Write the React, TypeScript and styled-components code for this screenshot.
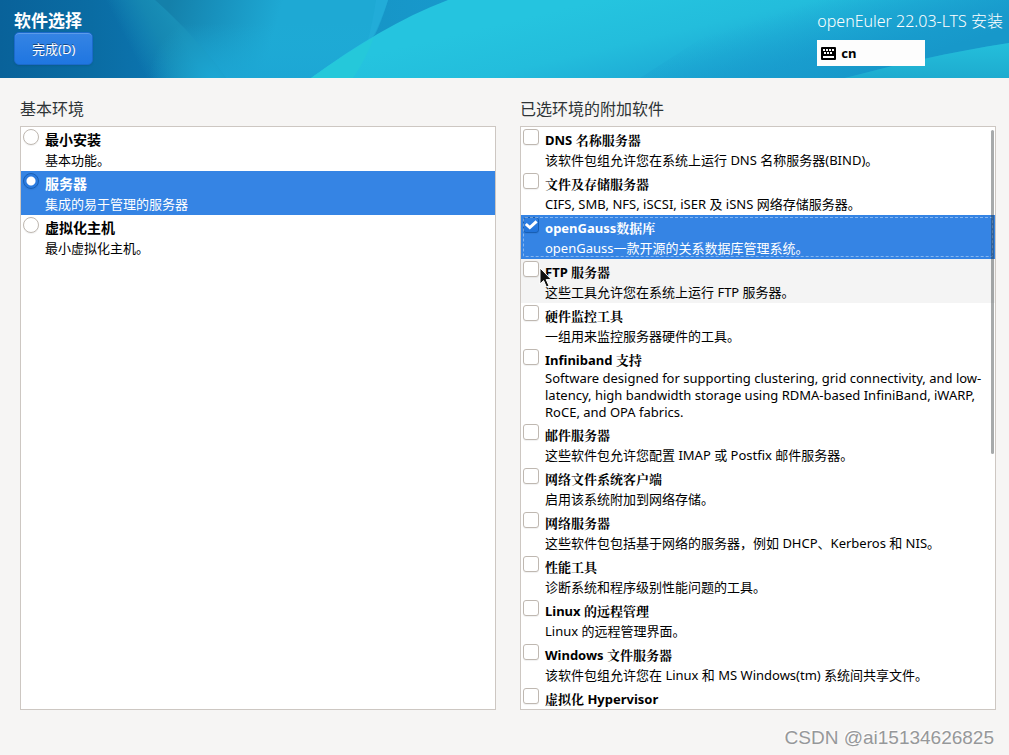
import React, { useState } from 'react';
import styled, { createGlobalStyle, css } from 'styled-components';

const sans = `'Noto Sans', 'Noto Sans CJK SC', sans-serif`;
const mixed = `'Noto Sans', 'Noto Serif CJK SC', 'Noto Sans CJK SC', sans-serif`;

const GlobalStyle = createGlobalStyle`
  *, *::before, *::after { box-sizing: border-box; }
  body { margin: 0; background: #f6f5f4; color: #000; font-family: ${sans}; font-size: 13px; }
`;

const Page = styled.div`
  display: flex;
  flex-direction: column;
  height: 100vh;
  overflow: hidden;
`;

const Header = styled.header`
  position: relative;
  display: flex;
  justify-content: space-between;
  flex: none;
  height: 78px;
  padding: 10px 6px 0 14px;
  color: #fff;
  background: #1a8fc4;
`;

const Backdrop = styled.svg`
  position: absolute;
  inset: 0;
  width: 100%;
  height: 100%;
`;

const HeaderColumn = styled.div<{ $gap: number }>`
  position: relative;
  display: flex;
  flex-direction: column;
  align-items: flex-start;
  gap: ${(p) => p.$gap}px;
`;

const Title = styled.h1`
  margin: 0;
  font-size: 17px;
  font-weight: 700;
  line-height: 22px;
`;

const Product = styled.div`
  font-size: 16px;
  font-weight: 300;
  line-height: 22px;
`;

const DoneButton = styled.button`
  height: 33px;
  padding: 0 17px;
  border: 1px solid #1b6acb;
  border-radius: 5px;
  background: linear-gradient(#3584e4, #1f76e1);
  box-shadow: inset 0 1px rgba(255, 255, 255, 0.2), 0 1px 2px rgba(0, 0, 0, 0.1);
  color: #fff;
  font: 400 13px/20px ${sans};
  text-shadow: 0 -1px rgba(0, 0, 0, 0.45);
`;

const KeyboardLayout = styled.button`
  display: flex;
  align-items: center;
  gap: 5px;
  width: 108px;
  height: 26px;
  padding: 0 4px;
  border: 0;
  background: #fdfdfd;
  color: #000;
  font: 700 13px/20px ${sans};
`;

const Main = styled.main`
  display: grid;
  flex: 1;
  grid-template-columns: 1fr 1fr;
  gap: 24px;
  min-height: 0;
  padding: 20px 13px 0 20px;
`;

const Column = styled.section`
  display: flex;
  flex-direction: column;
  gap: 6px;
  min-width: 0;
  min-height: 0;
`;

const Heading = styled.h2`
  margin: 0;
  color: #2e3436;
  font-size: 16px;
  font-weight: 400;
  line-height: 22px;
`;

const Panel = styled.div`
  position: relative;
  display: flex;
  flex: 1;
  min-height: 0;
  border: 1px solid #cdc7c2;
  background: #fff;
`;

const List = styled.div`
  flex: 1;
  min-width: 0;
  overflow-y: auto;
  scrollbar-width: none;
`;

const ScrollThumb = styled.div`
  position: absolute;
  top: 3px;
  right: 1px;
  width: 3px;
  height: 324px;
  border-radius: 2px;
  background: rgba(46, 52, 54, 0.42);
`;

const Row = styled.label<{ $selected: boolean; $hovered?: boolean; $focused?: boolean }>`
  position: relative;
  display: flex;
  gap: 6px;
  padding: 3px 6px 1px 2px;
  background: ${(p) => (p.$selected ? '#3584e4' : p.$hovered ? '#f4f4f4' : 'transparent')};
  color: ${(p) => (p.$selected ? '#fff' : '#000')};
  ${(p) =>
    p.$focused &&
    css`
      &::after {
        content: '';
        position: absolute;
        inset: 2px;
        border: 1px dashed rgba(255, 255, 255, 0.4);
        border-radius: 2px;
      }
    `}
`;

const Mark = styled.input`
  flex: none;
  appearance: none;
  width: 16px;
  height: 16px;
  margin: -1px 0 0;
  border: 1px solid #bfb8b1;
  border-radius: ${(p) => (p.type === 'radio' ? '50%' : '3px')};
  background: #fff;
  box-shadow: 0 1px 1px rgba(0, 0, 0, 0.06);
  &:checked {
    border-color: #185fb4;
    background: ${(p) =>
      p.type === 'radio' ? 'radial-gradient(circle, #fff 0 4px, #2a7ade 5px)' : 'linear-gradient(#3080e2, #2173da)'};
  }
`;

const Tick = styled.svg`
  position: absolute;
  top: 2px;
  left: 2px;
  width: 16px;
  height: 16px;
`;

const Pointer = styled.svg`
  position: absolute;
  z-index: 1;
  top: 8px;
  left: 18px;
  width: 14px;
  height: 22px;
`;

const Texts = styled.span`
  display: block;
  min-width: 0;
`;

const Name = styled.strong<{ $serif?: boolean }>`
  display: block;
  font-family: ${(p) => (p.$serif ? mixed : sans)};
  font-size: ${(p) => (p.$serif ? 13 : 14)}px;
  font-weight: 700;
  line-height: 20px;
`;

const Description = styled.span<{ $latin?: boolean }>`
  display: block;
  line-height: ${(p) => (p.$latin ? 17 : 20)}px;
`;

const Footer = styled.footer`
  flex: none;
  height: 45px;
  padding: 17px 15px 0 0;
  color: #96989a;
  font: 19px/22px 'Liberation Sans', sans-serif;
  text-align: right;
  text-shadow: -1px -1px #fff;
`;

const environments = [
  { name: '最小安装', text: '基本功能。' },
  { name: '服务器', text: '集成的易于管理的服务器' },
  { name: '虚拟化主机', text: '最小虚拟化主机。' },
];

const addons = [
  { name: 'DNS 名称服务器', text: '该软件包组允许您在系统上运行 DNS 名称服务器(BIND)。' },
  { name: '文件及存储服务器', text: 'CIFS, SMB, NFS, iSCSI, iSER 及 iSNS 网络存储服务器。' },
  { name: 'openGauss数据库', text: 'openGauss一款开源的关系数据库管理系统。' },
  { name: 'FTP 服务器', text: '这些工具允许您在系统上运行 FTP 服务器。' },
  { name: '硬件监控工具', text: '一组用来监控服务器硬件的工具。' },
  {
    name: 'Infiniband 支持',
    text: 'Software designed for supporting clustering, grid connectivity, and low-latency, high bandwidth storage using RDMA-based InfiniBand, iWARP, RoCE, and OPA fabrics.',
    latin: true,
  },
  { name: '邮件服务器', text: '这些软件包允许您配置 IMAP 或 Postfix 邮件服务器。' },
  { name: '网络文件系统客户端', text: '启用该系统附加到网络存储。' },
  { name: '网络服务器', text: '这些软件包包括基于网络的服务器，例如 DHCP、Kerberos 和 NIS。' },
  { name: '性能工具', text: '诊断系统和程序级别性能问题的工具。' },
  { name: 'Linux 的远程管理', text: 'Linux 的远程管理界面。' },
  { name: 'Windows 文件服务器', text: '该软件包组允许您在 Linux 和 MS Windows(tm) 系统间共享文件。' },
  { name: '虚拟化 Hypervisor', text: '' },
];

function HeaderArt() {
  return (
    <Backdrop viewBox="0 0 1009 78" preserveAspectRatio="none" aria-hidden="true">
      <defs>
        <linearGradient id="base" gradientUnits="userSpaceOnUse" x1="0" y1="0" x2="454" y2="0">
          <stop offset="0" stopColor="#09629a" />
          <stop offset="0.2" stopColor="#0a6ca3" />
          <stop offset="0.36" stopColor="#0c75b0" />
          <stop offset="0.7" stopColor="#1593c4" />
          <stop offset="1" stopColor="#1899cc" />
        </linearGradient>
        <linearGradient id="band" gradientUnits="userSpaceOnUse" x1="122" y1="32" x2="168" y2="8">
          <stop offset="0" stopColor="#178fb8" stopOpacity="0" />
          <stop offset="0.6" stopColor="#178bb3" stopOpacity="0.85" />
          <stop offset="1" stopColor="#198fb7" />
        </linearGradient>
        <radialGradient id="bandLow" gradientUnits="userSpaceOnUse" cx="215" cy="80" r="66">
          <stop offset="0" stopColor="#1ca7d4" />
          <stop offset="1" stopColor="#1ca7d4" stopOpacity="0" />
        </radialGradient>
        <linearGradient id="pool" gradientUnits="userSpaceOnUse" x1="170" y1="0" x2="275" y2="30">
          <stop offset="0" stopColor="#1480aa" />
          <stop offset="0.45" stopColor="#1892be" />
          <stop offset="1" stopColor="#1ea9d4" />
        </linearGradient>
        <linearGradient id="poolLow" x1="0" y1="0" x2="0" y2="1">
          <stop offset="0.3" stopColor="#1dadd8" stopOpacity="0" />
          <stop offset="1" stopColor="#1da6d4" stopOpacity="0.9" />
        </linearGradient>
        <linearGradient id="wave" gradientUnits="userSpaceOnUse" x1="640" y1="-10" x2="665" y2="95">
          <stop offset="0" stopColor="#25c4df" />
          <stop offset="0.45" stopColor="#23bddc" />
          <stop offset="1" stopColor="#1ba3d2" />
        </linearGradient>
        <linearGradient id="shade" gradientUnits="userSpaceOnUse" x1="835" y1="-5" x2="860" y2="75">
          <stop offset="0" stopColor="#189bcd" stopOpacity="0" />
          <stop offset="1" stopColor="#1798ca" />
        </linearGradient>
        <linearGradient id="corner" x1="0" y1="0" x2="0" y2="1">
          <stop offset="0" stopColor="#24bfdb" />
          <stop offset="1" stopColor="#1eabcf" />
        </linearGradient>
      </defs>
      <path d="M0 0H1009V78H0Z" fill="url(#base)" />
      <path d="M60 0H156C183 24 207 50 227 78H60Z" fill="url(#band)" />
      <path d="M100 0H156C183 24 207 50 227 78H100Z" fill="url(#bandLow)" />
      <path d="M155 0H388C382 18 375 34 370 42L312 78H226C206 50 182 24 155 0Z" fill="url(#pool)" />
      <path d="M155 0H388C382 18 375 34 370 42L312 78H226C206 50 182 24 155 0Z" fill="url(#poolLow)" />
      <path d="M376 0H388C384 14 379 27 375 35L368 40C371 28 374 14 376 0Z" fill="#25afdb" opacity="0.6" />
      <path d="M311 78C355 46 400 18 448 0H1009V78Z" fill="url(#wave)" />
      <path d="M311 78C333 62 354 49 374 37C369 51 362 65 353 78Z" fill="#25c8da" />
      <path d="M640 78L760 0H1009V43C950 52 895 65 845 78Z" fill="url(#shade)" />
      <path d="M845 78C895 65 950 52 1009 43V78Z" fill="url(#corner)" />
    </Backdrop>
  );
}

function KeyboardIcon() {
  return (
    <svg width="15" height="13" viewBox="0 0 15 13" aria-hidden="true">
      <rect width="15" height="13" rx="1" fill="#000" />
      <path
        d="M2 2h2v2H2zM5 2h2v2H5zM8 2h2v2H8zM11 2h2v2h-2zM3 5h2v2H3zM6 5h2v2H6zM9 5h2v2H9zM2 9h11v2H2z"
        fill="#fff"
      />
    </svg>
  );
}

export default function App() {
  const [environment, setEnvironment] = useState(1);
  const [chosen, setChosen] = useState<number[]>([2]);
  const toggle = (i: number) => setChosen((c) => (c.includes(i) ? c.filter((n) => n !== i) : [...c, i]));

  return (
    <Page lang="zh-CN">
      <GlobalStyle />
      <Header>
        <HeaderArt />
        <HeaderColumn $gap={0}>
          <Title>软件选择</Title>
          <DoneButton>完成(D)</DoneButton>
        </HeaderColumn>
        <HeaderColumn $gap={8}>
          <Product>openEuler 22.03-LTS 安装</Product>
          <KeyboardLayout>
            <KeyboardIcon />
            cn
          </KeyboardLayout>
        </HeaderColumn>
      </Header>
      <Main>
        <Column>
          <Heading>基本环境</Heading>
          <Panel>
            <List>
              {environments.map((e, i) => (
                <Row key={e.name} $selected={environment === i}>
                  <Mark
                    type="radio"
                    name="environment"
                    checked={environment === i}
                    onChange={() => setEnvironment(i)}
                  />
                  <Texts>
                    <Name>{e.name}</Name>
                    <Description>{e.text}</Description>
                  </Texts>
                </Row>
              ))}
            </List>
          </Panel>
        </Column>
        <Column>
          <Heading>已选环境的附加软件</Heading>
          <Panel>
            <List>
              {addons.map((a, i) => (
                <Row key={a.name} $selected={chosen.includes(i)} $focused={i === 2} $hovered={i === 3}>
                  <Mark type="checkbox" checked={chosen.includes(i)} onChange={() => toggle(i)} />
                  {chosen.includes(i) && (
                    <Tick viewBox="0 0 16 16" aria-hidden="true">
                      <path d="M2.8 7L6.8 10.6L13.6 4.4" fill="none" stroke="#fff" strokeWidth="3" />
                    </Tick>
                  )}
                  {i === 3 && (
                    <Pointer viewBox="0 0 14 22" aria-hidden="true">
                      <path
                        d="M1 1V17L4.6 13.6L7.4 20L10 18.8L7.2 12.6H12.4Z"
                        fill="#111"
                        stroke="#fff"
                        strokeWidth="1"
                      />
                    </Pointer>
                  )}
                  <Texts>
                    <Name $serif>{a.name}</Name>
                    {a.text && <Description $latin={a.latin}>{a.text}</Description>}
                  </Texts>
                </Row>
              ))}
            </List>
            <ScrollThumb />
          </Panel>
        </Column>
      </Main>
      <Footer>CSDN @ai15134626825</Footer>
    </Page>
  );
}
